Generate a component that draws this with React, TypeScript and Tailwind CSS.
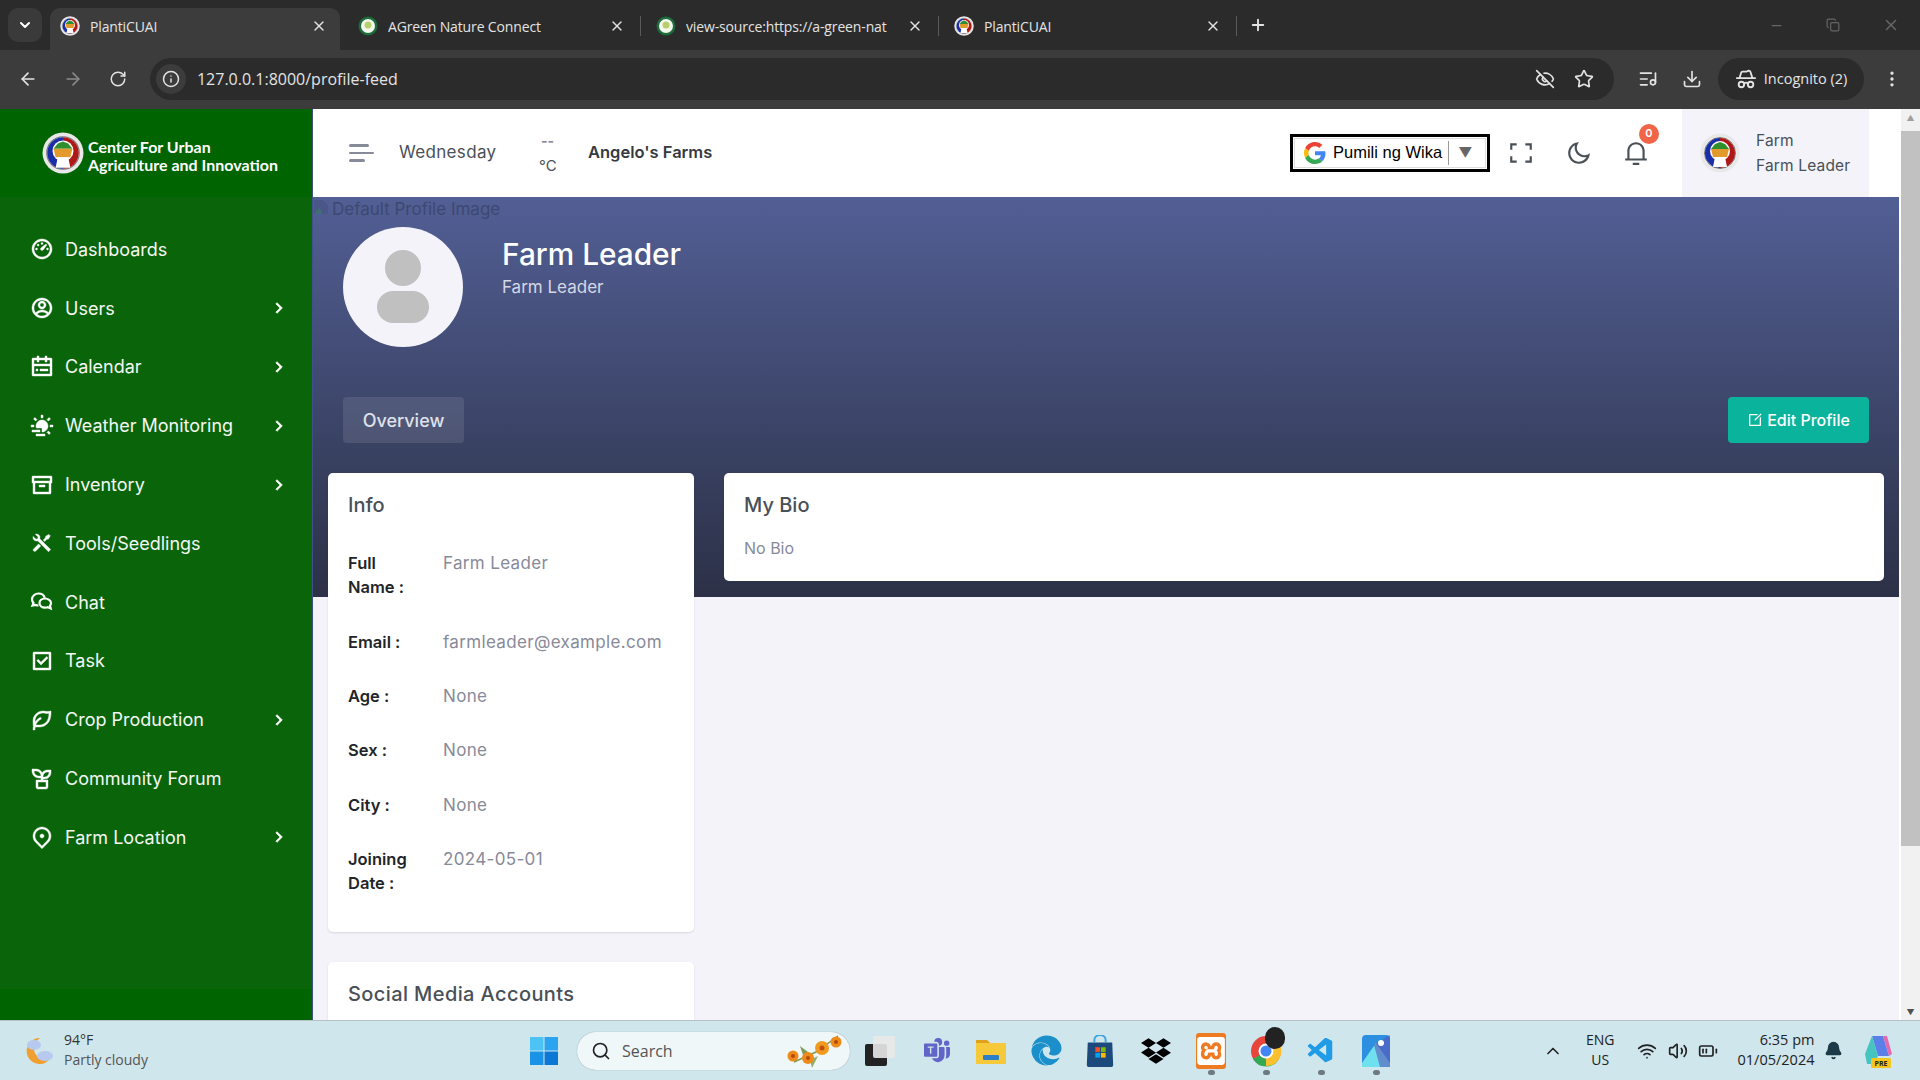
import React from 'react'
import {
  RiDashboard3Line, RiAccountCircleLine, RiCalendarTodoLine, RiSunFoggyFill, RiArchiveLine, RiToolsFill,
  RiCheckboxLine, RiLeafLine, RiPlantLine, RiMapPin2Line, RiArrowRightSLine, RiFullscreenLine, RiMoonLine,
  RiNotification3Line, RiEditBoxLine,
} from 'react-icons/ri'
import { ArrowLeft, ArrowRight, RotateCw, Info, EyeOff, Star, Download, ListMusic, EllipsisVertical, ChevronDown, X, Plus, Minus, Copy, Search, ChevronUp, Wifi, Volume2, BatteryMedium, Bell, HatGlasses } from 'lucide-react'
import { FaEdge, FaDropbox } from 'react-icons/fa'
import { SiXampp } from 'react-icons/si'
import { BsMicrosoftTeams } from 'react-icons/bs'
import { VscVscode } from 'react-icons/vsc'

const Seal = ({ className }: { className: string }) => (
  <svg viewBox="0 0 40 40" className={className}>
    <circle cx="20" cy="20" r="19.5" fill="#e8e8e8" />
    <circle cx="20" cy="20" r="15.5" fill="#fff" stroke="#777" strokeWidth="1" />
    <path d="M20 5 A15 15 0 0 0 20 35 Z" fill="#1a2ea8" />
    <path d="M20 5 A15 15 0 0 1 20 35 Z" fill="#b01818" />
    <circle cx="20" cy="18" r="10" fill="#fff" />
    <path d="M11 16 L15 11 L20 9 L25 11 L29 16 Z" fill="#2f8f2f" />
    <path d="M11 16 H29 L27 24 H13 Z" fill="#e39a2c" />
    <path d="M15 24 H25 L27 34 H13 Z" fill="#fff" />
  </svg>
)

const GreenFav = () => (
  <svg viewBox="0 0 20 20" className="h-5 w-5 shrink-0">
    <circle cx="10" cy="10" r="9.5" fill="#1c6b3a" />
    <circle cx="10" cy="10" r="7" fill="#f4f7ee" />
    <circle cx="10" cy="9" r="3.5" fill="#b6cf6a" />
  </svg>
)

const Tab = ({ title, active, green }: { title: string; active?: boolean; green?: boolean }) => (
  <div className="flex h-[42px] w-[298px] shrink-0 items-center">
    <div className={`flex h-full w-[290px] items-center rounded-t-[10px] pb-[6px] pl-[10px] ${active ? 'bg-[#3c3c3c]' : ''}`}>
      {green ? <GreenFav /> : <Seal className="h-5 w-5 shrink-0" />}
      <span className="ml-[10px] w-[212px] overflow-hidden whitespace-nowrap text-[14px] tracking-[-0.01em] text-[#e3e3e3]">{title}</span>
      <X className="ml-auto mr-[13px] h-4 w-4 text-[#e3e3e3]" strokeWidth={2} />
    </div>
    {!active && <div className="mb-[6px] ml-[2px] h-5 w-px bg-[#5a5a5a]" />}
  </div>
)

const menu = [
  { label: 'Dashboards', icon: RiDashboard3Line },
  { label: 'Users', icon: RiAccountCircleLine, more: true },
  { label: 'Calendar', icon: RiCalendarTodoLine, more: true },
  { label: 'Weather Monitoring', icon: RiSunFoggyFill, more: true },
  { label: 'Inventory', icon: RiArchiveLine, more: true },
  { label: 'Tools/Seedlings', icon: RiToolsFill },
  { label: 'Chat', icon: null },
  { label: 'Task', icon: RiCheckboxLine },
  { label: 'Crop Production', icon: RiLeafLine, more: true },
  { label: 'Community Forum', icon: RiPlantLine },
  { label: 'Farm Location', icon: RiMapPin2Line, more: true },
]

const ChatIcon = () => (
  <svg viewBox="0 0 24 24" className="h-[24px] w-[24px]" fill="none" stroke="currentColor" strokeWidth="2.200">
    <path d="M8.500 15.500c-1 0-2-.2-2.800-.6L2.500 15.500l1-2.600C2.500 11.800 2 10.500 2 9.300 2 6.100 5 3.500 8.500 3.500c3 0 5.500 1.800 6.200 4.300" />
    <path d="M15 8.500c3 0 6 2 6 4.500 0 1-.4 2-1 2.700l.7 2.800-3-1.200c-.8.300-1.700.400-2.700.400-3 0-5.500-2-5.500-4.600S12 8.500 15 8.500z" />
  </svg>
)

const infoRows = [
  ['Full Name\u00a0:', 'Farm Leader'],
  ['Email\u00a0:', 'farmleader@example.com'],
  ['Age\u00a0:', 'None'],
  ['Sex\u00a0:', 'None'],
  ['City\u00a0:', 'None'],
  ['Joining Date\u00a0:', '2024-05-01'],
]

const Sidebar = () => (
  <aside className="flex w-[313px] shrink-0 flex-col border-r border-[#405189] bg-[#0a650a] text-white">
    <div className="flex h-[88px] items-center bg-[#006400] pl-[42px]">
      <Seal className="h-[42px] w-[42px] shrink-0" />
      <div className="ml-[4px] mt-[5px] whitespace-nowrap font-['Lato',sans-serif] text-[16px] font-bold leading-[18px]">
        Center For Urban<br />Agriculture and Innovation
      </div>
    </div>
    <nav className="flex-1 pt-[23px]">
      {menu.map((m) => (
        <div key={m.label} className="flex h-[58.8px] items-center pl-[30px] pr-[23px]">
          <span className="flex w-[35px] shrink-0">
            {m.icon ? <m.icon className="h-[24px] w-[24px] stroke-current stroke-[0.4px]" /> : <ChatIcon />}
          </span>
          <span className="text-[18px] text-[#f4f8f4]">{m.label}</span>
          {m.more && <RiArrowRightSLine className="ml-auto h-[20px] w-[20px] stroke-current stroke-[0.8px]" />}
        </div>
      ))}
    </nav>
    <div className="h-[31px] bg-[#006400]" />
  </aside>
)

const Header = () => (
  <header className="flex h-[88px] shrink-0 items-center bg-white pl-[36px] pr-[30px]">
    <div className="flex w-[26px] flex-col gap-[5px]">
      <span className="h-[3px] w-[20px] rounded bg-[#878a99]" />
      <span className="h-[2px] w-[25px] rounded bg-[#878a99]" />
      <span className="h-[3px] w-[16px] rounded bg-[#878a99]" />
    </div>
    <span className="ml-[24px] w-[140px] text-[17px] tracking-[0.02em] text-[#495057]">Wednesday</span>
    <div className="-mt-[5px] flex w-[49px] flex-col items-start text-[#495057]">
      <span className="ml-[2px] text-[14px] font-bold leading-[30px] text-[#878a99]">--</span>
      <span className="text-[15px] leading-[20px]">°C</span>
    </div>
    <span className="-mt-[1px] text-[16.5px] font-semibold text-[#343a40]">Angelo's Farms</span>
    <div className="ml-auto flex h-[38px] w-[200px] items-center border-[3px] border-black bg-white p-[1px]">
      <div className="flex h-full w-full items-center border border-[#ddd] pl-[9px]">
        <svg viewBox="0 0 48 48" className="h-[22px] w-[22px] shrink-0">
          <path fill="#EA4335" d="M24 9.500c3.500 0 6.700 1.200 9.200 3.600l6.900-6.900C35.900 2.400 30.500 0 24 0 14.600 0 6.500 5.400 2.600 13.200l8 6.200C12.400 13.700 17.700 9.500 24 9.500z" />
          <path fill="#4285F4" d="M46.900 24.500c0-1.600-.1-3.100-.4-4.500H24v9h12.900c-.6 3-2.200 5.500-4.700 7.200l7.700 6c4.500-4.200 7-10.300 7-17.700z" />
          <path fill="#FBBC05" d="M10.500 28.600c-.5-1.400-.8-3-.8-4.600s.3-3.200.8-4.600l-8-6.200C.9 16.500 0 20.100 0 24s.9 7.500 2.600 10.800l7.900-6.200z" />
          <path fill="#34A853" d="M24 48c6.500 0 11.900-2.100 15.900-5.800l-7.700-6c-2.100 1.400-4.900 2.300-8.200 2.300-6.300 0-11.600-4.200-13.500-10l-8 6.200C6.500 42.600 14.600 48 24 48z" />
        </svg>
        <span className="ml-[7px] -mt-[1px] whitespace-nowrap font-['Liberation_Sans',sans-serif] text-[16.5px] text-black">Pumili ng Wika</span>
        <span className="ml-[6px] h-[24px] w-px bg-[#999]" />
        <span className="ml-[9px] text-[14px] leading-none text-[#666]">▼</span>
      </div>
    </div>
    <RiFullscreenLine className="-mt-[1px] ml-[18px] h-[26px] w-[26px] text-[#495057]" />
    <RiMoonLine className="-mt-[1px] ml-[32px] h-[26px] w-[26px] text-[#495057]" />
    <div className="relative -mt-[1px] ml-[31px] h-[26px] w-[26px]">
      <RiNotification3Line className="h-[26px] w-[26px] text-[#495057]" />
      <span className="absolute -right-[10px] -top-[16px] flex h-[20px] w-[20px] items-center justify-center rounded-full bg-[#f06548] text-[11px] font-semibold text-white">0</span>
    </div>
    <div className="ml-[33px] flex h-full w-[187px] items-center bg-[#f3f3f9] pl-[18px]">
      <Seal className="h-[40px] w-[40px] shrink-0" />
      <div className="ml-[16px] whitespace-nowrap text-[15.500px] leading-[25px] tracking-[0.01em] text-[#495057]">
        <div>Farm</div>
        <div>Farm Leader</div>
      </div>
    </div>
  </header>
)

const Hero = () => (
  <section className="flex h-[400px] shrink-0 flex-col bg-gradient-to-b from-[#525f95] to-[#2c3147] px-[30px]">
    <div className="-ml-[30px] flex h-[30px] items-start text-[17px] leading-[24px] text-[#3d4871]">
      <svg viewBox="0 0 16 16" className="mr-[3px] mt-[2px] h-[16px] w-[16px] shrink-0">
        <path d="M1 1h9l5 5v9H1z" fill="#4a5688" />
        <path d="M2 13l4-4 3 3-1 3H2z" fill="#3f6f72" />
      </svg>
      <span>Default Profile Image</span>
    </div>
    <div className="flex h-[120px] shrink-0">
      <div className="flex h-[120px] w-[120px] shrink-0 flex-col items-center rounded-full bg-[#f3f3f9] pt-[23px]">
        <span className="h-[36px] w-[36px] rounded-full bg-[#c0c0c0]" />
        <span className="mt-[5px] h-[32px] w-[52px] rounded-[16px] bg-[#c0c0c0]" />
      </div>
      <div className="ml-[39px] pt-[6px]">
        <div className="text-[29.800px] font-medium leading-[42px] text-white">Farm Leader</div>
        <div className="text-[17px] leading-[24px] text-[#d5d8e4]">Farm Leader</div>
      </div>
    </div>
    <div className="mt-[50px] flex items-center justify-between">
      <button className="flex h-[46px] w-[121px] items-center justify-center rounded bg-white/10 text-[18px] font-medium text-[#dfe1ea]">Overview</button>
      <button className="flex h-[46px] w-[141px] items-center justify-center gap-[4px] rounded bg-[#0ab39c] text-[16px] font-medium text-white">
        <RiEditBoxLine className="h-[16px] w-[16px]" />
        Edit Profile
      </button>
    </div>
  </section>
)

const Cards = () => (
  <div className="relative flex gap-[30px] px-[15px] -mt-[124px]">
    <div className="flex w-[366px] shrink-0 flex-col gap-[30px]">
      <div className="rounded-[5px] bg-white px-5 pb-[22px] pt-5 shadow-[0_1px_2px_rgba(56,65,74,0.15)]">
        <h5 className="mb-[19px] text-[20px] font-medium leading-[24px] text-[#495057]">Info</h5>
        {infoRows.map(([label, value]) => (
          <div key={label} className="flex py-[15.2px] leading-[24px]">
            <span className="w-[95px] shrink-0 pr-4 text-[16.500px] font-semibold text-[#212529]">{label}</span>
            <span className="whitespace-nowrap text-[17px] tracking-[0.02em] text-[#878a99]">{value}</span>
          </div>
        ))}
      </div>
      <div className="h-[200px] rounded-[5px] bg-white p-5 shadow-[0_1px_2px_rgba(56,65,74,0.15)]">
        <h5 className="text-[20px] font-medium leading-[24px] tracking-[0.02em] text-[#495057]">Social Media Accounts</h5>
      </div>
    </div>
    <div className="h-[108px] w-[1160px] rounded-[5px] bg-white px-5 pt-5 shadow-[0_1px_2px_rgba(56,65,74,0.15)]">
      <h5 className="text-[20px] font-medium leading-[24px] text-[#495057]">My Bio</h5>
      <p className="mt-[19px] text-[16px] leading-[24px] text-[#878a99]">No Bio</p>
    </div>
  </div>
)

const Win11 = () => (
  <svg viewBox="0 0 28 28" className="h-[28px] w-[28px]">
    <rect x="0" y="0" width="13.500" height="13.500" fill="#4cc2f5" />
    <rect x="14.500" y="0" width="13.500" height="13.500" fill="#2aa4ee" />
    <rect x="0" y="14.500" width="13.500" height="13.500" fill="#1a93e6" />
    <rect x="14.500" y="14.500" width="13.500" height="13.500" fill="#0a78d4" />
  </svg>
)

const Flowers = () => (
  <svg viewBox="0 0 56 34" className="ml-auto mr-[8px] h-[34px] w-[56px]">
    <path d="M8 28 L30 18 L52 2" fill="none" stroke="#7a9a50" strokeWidth="1.500" />
    <path d="M14 12 L22 18 L18 24 Z" fill="#7f9a5a" />
    <path d="M24 26 L32 22 L26 34 Z" fill="#8fb06a" />
    <circle cx="7" cy="22" r="5.500" fill="#ee8a1a" />
    <circle cx="7" cy="22" r="2" fill="#b5480e" />
    <circle cx="22" cy="24" r="6" fill="#ee8a1a" />
    <circle cx="22" cy="24" r="2" fill="#b5480e" />
    <circle cx="36" cy="14" r="7" fill="#f09a20" />
    <circle cx="36" cy="14" r="2.500" fill="#c2500f" />
    <circle cx="50" cy="8" r="5.500" fill="#ee8a1a" />
    <circle cx="50" cy="8" r="2" fill="#b5480e" />
  </svg>
)

const TaskIcon = ({ children }: { children: React.ReactNode }) => (
  <div className="relative ml-[25px] flex h-[32px] w-[30px] items-center justify-center">
    {children}
    <span className="absolute -bottom-[8px] h-[5px] w-[7px] rounded-full bg-[#6e7a80]" />
  </div>
)

const Taskbar = () => (
  <footer className="flex h-[60px] shrink-0 items-center border-t border-[#b5c3c8] bg-[#cfe6ec] font-['Open_Sans',sans-serif]">
    <div className="ml-[24px] flex w-[506px] items-center">
      <svg viewBox="0 0 32 32" className="h-[32px] w-[32px] shrink-0">
        <path d="M16 3a13 13 0 1 0 9 22A12 12 0 0 1 16 3z" fill="#f0a030" />
        <ellipse cx="10" cy="10" rx="7" ry="5" fill="#b7c9ee" />
        <ellipse cx="21" cy="21" rx="8" ry="5" fill="#b7c9ee" />
      </svg>
      <div className="ml-[8px] -mt-[2px] text-[14px] leading-[20px] text-[#333]">
        <div>94°F</div>
        <div className="text-[#555]">Partly cloudy</div>
      </div>
    </div>
    <Win11 />
    <div className="ml-[19px] flex h-[38px] w-[273px] items-center rounded-full bg-[#eff7f9] pl-[14px] shadow-[0_0_1px_rgba(0,0,0,0.4)]">
      <Search className="h-[20px] w-[20px] text-[#222]" strokeWidth={2} />
      <span className="ml-[11px] text-[16px] text-[#555]">Search</span>
      <Flowers />
    </div>
    <div className="ml-[15px] flex items-center">
      <div className="relative h-[30px] w-[30px]">
        <span className="absolute bottom-0 left-0 h-[22px] w-[22px] rounded-[2px] bg-[#222]" />
        <span className="absolute right-0 top-0 h-[22px] w-[22px] rounded-[2px] bg-[#e9e9e9]/90" />
      </div>
      <BsMicrosoftTeams className="ml-[29px] h-[26px] w-[26px] text-[#6264c8]" />
      <svg viewBox="0 0 32 28" className="ml-[25px] h-[28px] w-[32px]">
        <path d="M1 3h11l3 3h16v21H1z" fill="#f5c93a" />
        <path d="M1 3h11l3 3H1z" fill="#e0a21a" />
        <rect x="8" y="18" width="16" height="5" rx="1" fill="#2a7fc9" />
      </svg>
      <FaEdge className="ml-[24px] h-[31px] w-[31px] text-[#1a8fc9]" />
      <svg viewBox="0 0 30 34" className="ml-[23px] h-[32px] w-[30px]">
        <path d="M2 8h26l1 24a2 2 0 0 1-2 2H3a2 2 0 0 1-2-2z" fill="#1d4a7c" />
        <path d="M9 8V5a6 5 0 0 1 12 0v3" fill="none" stroke="#3aa5e0" strokeWidth="2" />
        <rect x="10" y="13" width="5" height="5" fill="#f25022" />
        <rect x="16" y="13" width="5" height="5" fill="#7fba00" />
        <rect x="10" y="19" width="5" height="5" fill="#00a4ef" />
        <rect x="16" y="19" width="5" height="5" fill="#ffb900" />
      </svg>
      <FaDropbox className="ml-[26px] h-[30px] w-[30px] text-black" />
      <TaskIcon>
        <span className="flex h-[36px] w-[30px] items-center justify-center rounded-[3px] bg-[#ee7a22]">
          <SiXampp className="h-[28px] w-[28px] text-white" />
        </span>
      </TaskIcon>
      <TaskIcon>
        <span className="relative block h-[32px] w-[32px]">
          <svg viewBox="0 0 32 32" className="h-[32px] w-[32px]">
            <circle cx="16" cy="16" r="15" fill="#e8453c" />
            <path d="M16 16 L29 24 A15 15 0 0 1 3 24 Z" fill="#34a853" />
            <path d="M16 16 L16 31 A15 15 0 0 0 29 8 Z" fill="#fbc02d" />
            <circle cx="16" cy="16" r="7.500" fill="#fff" />
            <circle cx="16" cy="16" r="5.500" fill="#4285f4" />
          </svg>
          <span className="absolute -right-[3px] -top-[8px] h-[22px] w-[20px] rounded-full bg-[#222]" />
        </span>
      </TaskIcon>
      <TaskIcon>
        <VscVscode className="h-[32px] w-[32px] text-[#1f9ce5]" />
      </TaskIcon>
      <TaskIcon>
        <svg viewBox="0 0 28 32" className="h-[32px] w-[28px]">
          <rect width="28" height="32" rx="4" fill="#2d8fe0" />
          <path d="M14 8 L28 28 V32 H0 V28 Z" fill="#6fe0ee" />
          <path d="M28 0 V32 H18 L12 10 Z" fill="#5a55b5" opacity="0.6" />
          <circle cx="19" cy="8" r="3" fill="#fff" />
        </svg>
      </TaskIcon>
    </div>
    <ChevronUp className="ml-[152px] h-[20px] w-[20px] text-[#222]" />
    <div className="ml-[23px] -mt-[2px] text-center text-[14px] leading-[20px] text-[#222]">ENG<br />US</div>
    <Wifi className="ml-[22px] h-[20px] w-[20px] text-[#222]" />
    <Volume2 className="ml-[11px] h-[20px] w-[20px] text-[#222]" />
    <BatteryMedium className="ml-[10px] h-[20px] w-[20px] text-[#222]" />
    <div className="ml-[20px] -mt-[1px] text-right text-[14.500px] leading-[20px] text-[#222]">6:35 pm<br />01/05/2024</div>
    <Bell className="ml-[10px] h-[19px] w-[19px] fill-[#1d3a48] text-[#1d3a48]" />
    <svg viewBox="0 0 30 34" className="ml-[20px] h-[34px] w-[30px]">
      <path d="M9 2h11l6 20H15z" fill="#5a7fe8" />
      <path d="M2 20 9 2l6 20-4 8H4z" fill="#45c4c0" />
      <path d="M20 2h4l5 18-3 2z" fill="#e36ab0" />
      <rect x="8" y="24" width="20" height="10" rx="1.500" fill="#f6c51e" />
      <text x="18" y="32" textAnchor="middle" fontSize="7" fontWeight="700" fill="#222">PRE</text>
    </svg>
  </footer>
)

const App = () => {
  return (
    <div className="flex h-screen w-[1920px] flex-col overflow-hidden font-['Inter',sans-serif]">
      {/* browser chrome */}
      <div className="flex h-[50px] shrink-0 items-end bg-[#2b2b2b] pl-2 font-['Open_Sans',sans-serif]">
        <div className="mb-[8px] flex h-[34px] w-[34px] items-center justify-center rounded-[10px] bg-[#3a3a3a]">
          <ChevronDown className="h-4 w-4 text-white" strokeWidth={3} />
        </div>
        <div className="ml-2 flex">
          <Tab title="PlantiCUAI" active />
          <Tab title="AGreen Nature Connect" green />
          <Tab title="view-source:https://a-green-nat" green />
          <Tab title="PlantiCUAI" />
        </div>
        <Plus className="mb-[16px] ml-[7px] h-[18px] w-[18px] text-[#e3e3e3]" strokeWidth={2.5} />
        <div className="mb-[16px] ml-auto flex items-center gap-[42px] pr-[20px] text-[#666]">
          <Minus className="h-[15px] w-[15px]" />
          <Copy className="h-[14px] w-[14px]" />
          <X className="h-[18px] w-[18px]" />
        </div>
      </div>
      <div className="flex h-[59px] shrink-0 items-center bg-[#3c3c3c] pb-[1px] pl-[18px] pr-[18px] font-['Open_Sans',sans-serif] text-[#e3e3e3]">
        <ArrowLeft className="h-[20px] w-[20px]" />
        <ArrowRight className="ml-[25px] h-[20px] w-[20px] text-[#8a8a8a]" />
        <RotateCw className="ml-[26px] h-[18px] w-[18px]" />
        <div className="ml-[23px] flex h-[42px] w-[1465px] items-center rounded-full bg-[#2b2b2b] pl-[6px] pr-[20px]">
          <span className="flex h-[30px] w-[30px] items-center justify-center rounded-full bg-[#3c3c3c]">
            <Info className="h-[18px] w-[18px]" />
          </span>
          <span className="ml-[11px] text-[16px]">127.0.0.1:8000/profile-feed</span>
          <EyeOff className="ml-auto h-[20px] w-[20px]" />
          <Star className="ml-[19px] h-[20px] w-[20px]" />
        </div>
        <ListMusic className="ml-[24px] h-[20px] w-[20px]" />
        <Download className="ml-[24px] h-[20px] w-[20px]" />
        <div className="ml-[16px] flex h-[42px] w-[146px] items-center justify-center gap-[7px] rounded-full bg-[#2b2b2b] text-[14.500px]">
          <HatGlasses className="h-[22px] w-[22px]" />
          Incognito (2)
        </div>
        <EllipsisVertical className="ml-[18px] h-[20px] w-[20px]" />
      </div>

      <div className="flex min-h-0 flex-1">
        <Sidebar />
        <main className="min-w-0 flex-1 overflow-hidden bg-[#f3f3f9]">
          <Header />
          <Hero />
          <Cards />
        </main>
        <div className="ml-[2px] flex w-[19px] shrink-0 flex-col bg-[#f1f1f1]">
          <div className="flex h-[17px] items-center justify-center text-[8px] leading-none text-[#a0a0a0]">▲</div>
          <div className="mt-[5px] h-[715px] bg-[#c1c1c1]" />
          <div className="mt-auto flex h-[17px] items-center justify-center text-[8px] leading-none text-[#505050]">▼</div>
        </div>
      </div>
      <Taskbar />
    </div>
  )
}

export default App
